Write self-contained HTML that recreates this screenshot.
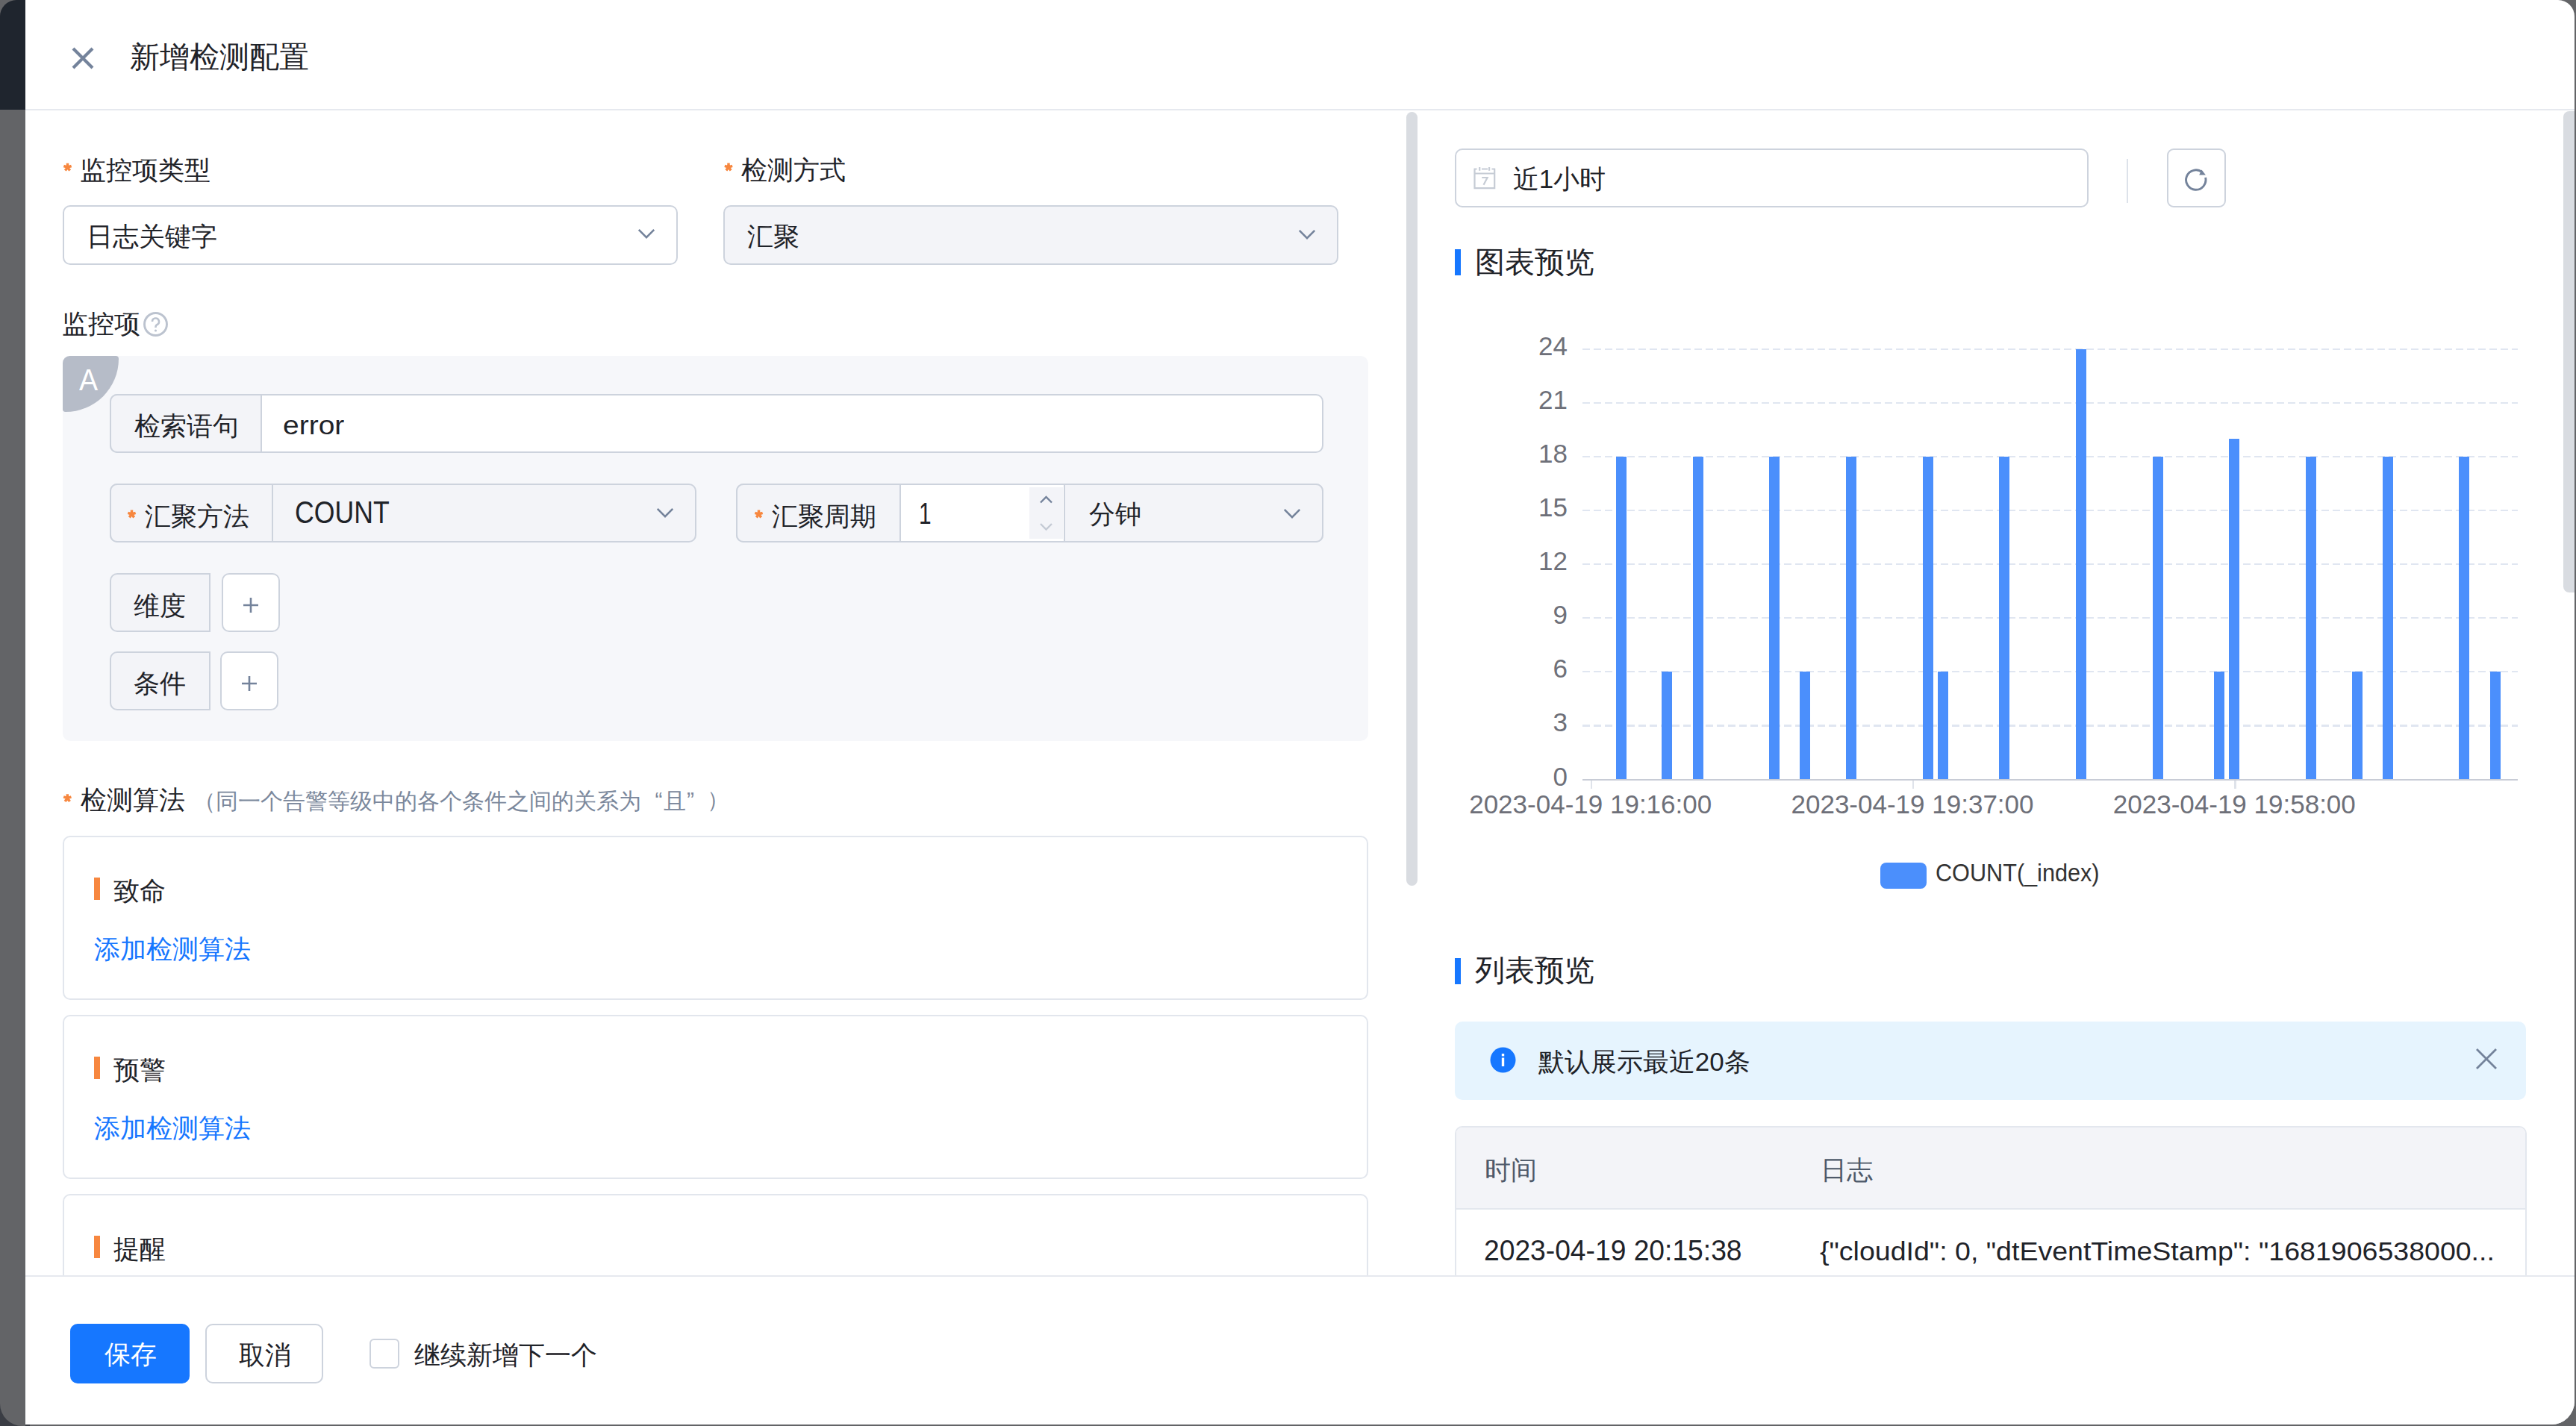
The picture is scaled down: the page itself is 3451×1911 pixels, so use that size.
<!DOCTYPE html>
<html><head><meta charset="utf-8"><title>新增检测配置</title>
<style>
html,body{margin:0;padding:0;width:3451px;height:1911px;overflow:hidden;background:#636467}
.t{position:absolute;white-space:nowrap;font-family:"Liberation Sans",sans-serif;line-height:1;}
</style></head><body>
<div style="position:absolute;left:0px;top:0px;width:3451px;height:1911px;background:#636467"></div>
<div style="position:absolute;left:0px;top:1860px;width:40px;height:51px;background:#3a3d44"></div>
<div style="position:absolute;left:0px;top:147px;width:34px;height:1764px;background:#636467;border-bottom-left-radius:30px"></div>
<div style="position:absolute;left:0px;top:0px;width:34px;height:147px;background:#1f252e;border-top-left-radius:22px"></div>
<div style="position:absolute;left:34px;top:0px;width:3415px;height:1909px;background:#fff;border-top-right-radius:22px;border-bottom-right-radius:31px"></div>
<div style="position:absolute;left:34px;top:146px;width:3415px;height:2px;background:#e6e9ef"></div>
<svg style="position:absolute;left:95px;top:62px" width="32" height="32" viewBox="0 0 32 32"><path d="M3 3L29 29M29 3L3 29" stroke="#74839b" stroke-width="4.2"/></svg>
<div class="t" style="left:173.5px;top:56.0px;font-size:40px;color:#1f2329;">新增检测配置</div>
<svg style="position:absolute;left:0;top:0" width="3451" height="1911"><path d="M90.50 224.20L90.50 218.80M90.50 224.20L95.64 222.53M90.50 224.20L93.67 228.57M90.50 224.20L87.33 228.57M90.50 224.20L85.36 222.53" stroke="#f7873f" stroke-width="3.5" stroke-linecap="butt"/></svg>
<div class="t" style="left:106.8px;top:210.3px;font-size:35px;color:#1f2329;">监控项类型</div>
<div style="position:absolute;left:84px;top:275px;width:824px;height:80px;box-sizing:border-box;border:2.5px solid #cdd3dd;border-radius:10px;background:#fff"></div>
<div class="t" style="left:116.2px;top:299.1px;font-size:35px;color:#1f2329;">日志关键字</div>
<svg style="position:absolute;left:853px;top:305px" width="26" height="16" viewBox="-2 -2 26 16"><path d="M0.8 0.8L11.0 11.2L21.2 0.8" fill="none" stroke="#74839b" stroke-width="2.6"/></svg>
<svg style="position:absolute;left:0;top:0" width="3451" height="1911"><path d="M976.00 224.00L976.00 218.60M976.00 224.00L981.14 222.33M976.00 224.00L979.17 228.37M976.00 224.00L972.83 228.37M976.00 224.00L970.86 222.33" stroke="#f7873f" stroke-width="3.5" stroke-linecap="butt"/></svg>
<div class="t" style="left:993.0px;top:210.0px;font-size:35px;color:#1f2329;">检测方式</div>
<div style="position:absolute;left:969px;top:275px;width:824px;height:80px;box-sizing:border-box;border:2.5px solid #cdd3dd;border-radius:10px;background:#f3f4f8"></div>
<div class="t" style="left:1001.2px;top:298.5px;font-size:35px;color:#1f2329;">汇聚</div>
<svg style="position:absolute;left:1738px;top:305.5px" width="26" height="16" viewBox="-2 -2 26 16"><path d="M0.8 0.8L11.0 11.2L21.2 0.8" fill="none" stroke="#74839b" stroke-width="2.6"/></svg>
<div class="t" style="left:83.0px;top:416.0px;font-size:35px;color:#1f2329;">监控项</div>
<svg style="position:absolute;left:192px;top:418px" width="34" height="34" viewBox="0 0 34 34"><circle cx="16.5" cy="16.5" r="15" fill="none" stroke="#bcc3cf" stroke-width="2.9"/><path d="M12 13a4.5 4.5 0 1 1 6.5 4c-1.3.7-2 1.5-2 3v1" fill="none" stroke="#bcc3cf" stroke-width="2.6"/><circle cx="16.5" cy="25" r="1.6" fill="#bcc3cf"/></svg>
<div style="position:absolute;left:84px;top:477px;width:1749px;height:516px;background:#f6f7fa;border-radius:10px"></div>
<div style="position:absolute;left:84px;top:477px;width:75px;height:75px;background:#b6bcc8;border-radius:10px 4px 100% 4px / 10px 4px 100% 4px"></div>
<div class="t" style="left:106.0px;top:489.5px;font-size:40.25px;color:#fff;transform:scaleX(0.9338);transform-origin:0 0;">A</div>
<div style="position:absolute;left:147px;top:528px;width:1626px;height:79px;box-sizing:border-box;border:2.5px solid #cdd3dd;border-radius:10px;background:#fff"></div>
<div style="position:absolute;left:147px;top:528px;width:204px;height:79px;box-sizing:border-box;border:2.5px solid #cdd3dd;border-radius:10px 0 0 10px;background:#f3f4f8"></div>
<div class="t" style="left:179.7px;top:553.2px;font-size:35px;color:#1f2329;">检索语句</div>
<div class="t" style="left:378.7px;top:553.4px;font-size:35.46px;color:#1f2329;transform:scaleX(1.0994);transform-origin:0 0;">error</div>
<div style="position:absolute;left:147px;top:648px;width:786px;height:79px;box-sizing:border-box;border:2.5px solid #cdd3dd;border-radius:10px;background:#f3f4f8"></div>
<div style="position:absolute;left:147px;top:648px;width:219px;height:79px;box-sizing:border-box;border:2.5px solid #cdd3dd;border-radius:10px 0 0 10px;background:#f3f4f8"></div>
<svg style="position:absolute;left:0;top:0" width="3451" height="1911"><path d="M176.50 689.00L176.50 683.60M176.50 689.00L181.64 687.33M176.50 689.00L179.67 693.37M176.50 689.00L173.33 693.37M176.50 689.00L171.36 687.33" stroke="#f7873f" stroke-width="3.5" stroke-linecap="butt"/></svg>
<div class="t" style="left:193.8px;top:674.2px;font-size:35px;color:#1f2329;">汇聚方法</div>
<div class="t" style="left:395.3px;top:666.2px;font-size:41.71px;color:#1f2329;transform:scaleX(0.8543);transform-origin:0 0;">COUNT</div>
<svg style="position:absolute;left:878px;top:679px" width="26" height="16" viewBox="-2 -2 26 16"><path d="M0.8 0.8L11.0 11.2L21.2 0.8" fill="none" stroke="#74839b" stroke-width="2.6"/></svg>
<div style="position:absolute;left:986px;top:648px;width:787px;height:79px;box-sizing:border-box;border:2.5px solid #cdd3dd;border-radius:10px;background:#fff"></div>
<div style="position:absolute;left:986px;top:648px;width:221px;height:79px;box-sizing:border-box;border:2.5px solid #cdd3dd;border-radius:10px 0 0 10px;background:#f3f4f8"></div>
<svg style="position:absolute;left:0;top:0" width="3451" height="1911"><path d="M1016.50 689.00L1016.50 683.60M1016.50 689.00L1021.64 687.33M1016.50 689.00L1019.67 693.37M1016.50 689.00L1013.33 693.37M1016.50 689.00L1011.36 687.33" stroke="#f7873f" stroke-width="3.5" stroke-linecap="butt"/></svg>
<div class="t" style="left:1034.0px;top:673.8px;font-size:35px;color:#1f2329;">汇聚周期</div>
<div class="t" style="left:1231.2px;top:668.6px;font-size:39.81px;color:#1f2329;transform:scaleX(0.7502);transform-origin:0 0;">1</div>
<div style="position:absolute;left:1379px;top:653px;width:45px;height:69px;background:#f3f4f8"></div>
<svg style="position:absolute;left:1392px;top:662px" width="20" height="52" viewBox="0 0 20 52"><path d="M2 11.5L9.5 4L17 11.5" fill="none" stroke="#74839b" stroke-width="2.4"/><path d="M2 40L9.5 47.5L17 40" fill="none" stroke="#c4cad4" stroke-width="2.4"/></svg>
<div style="position:absolute;left:1425px;top:648px;width:348px;height:79px;box-sizing:border-box;border:2.5px solid #cdd3dd;border-radius:0 10px 10px 0;background:#f3f4f8"></div>
<div class="t" style="left:1458.5px;top:671.0px;font-size:35px;color:#1f2329;">分钟</div>
<svg style="position:absolute;left:1718px;top:680px" width="26" height="16" viewBox="-2 -2 26 16"><path d="M0.8 0.8L11.0 11.2L21.2 0.8" fill="none" stroke="#74839b" stroke-width="2.6"/></svg>
<div style="position:absolute;left:147px;top:768px;width:135px;height:79px;box-sizing:border-box;border:2.5px solid #cdd3dd;border-radius:10px 0 0 10px;background:#f3f4f8"></div>
<div class="t" style="left:179.1px;top:794.0px;font-size:35px;color:#1f2329;">维度</div>
<div style="position:absolute;left:297px;top:768px;width:78px;height:79px;box-sizing:border-box;border:2.5px solid #cdd3dd;border-radius:10px;background:#fff"></div>
<svg style="position:absolute;left:325px;top:800px" width="22" height="22" viewBox="0 0 22 22"><path d="M1 11H21M11 1V21" stroke="#74839b" stroke-width="2.6"/></svg>
<div style="position:absolute;left:147px;top:873px;width:135px;height:79px;box-sizing:border-box;border:2.5px solid #cdd3dd;border-radius:10px 0 0 10px;background:#f3f4f8"></div>
<div class="t" style="left:179.1px;top:898.0px;font-size:35px;color:#1f2329;">条件</div>
<div style="position:absolute;left:295px;top:873px;width:78px;height:79px;box-sizing:border-box;border:2.5px solid #cdd3dd;border-radius:10px;background:#fff"></div>
<svg style="position:absolute;left:323px;top:905px" width="22" height="22" viewBox="0 0 22 22"><path d="M1 11H21M11 1V21" stroke="#74839b" stroke-width="2.6"/></svg>
<svg style="position:absolute;left:0;top:0" width="3451" height="1911"><path d="M90.30 1069.60L90.30 1064.20M90.30 1069.60L95.44 1067.93M90.30 1069.60L93.47 1073.97M90.30 1069.60L87.13 1073.97M90.30 1069.60L85.16 1067.93" stroke="#f7873f" stroke-width="3.5" stroke-linecap="butt"/></svg>
<div class="t" style="left:107.6px;top:1054.2px;font-size:35px;color:#1f2329;">检测算法</div>
<div class="t" style="left:258.8px;top:1058.7px;font-size:30px;color:#7b889c;">（同一个告警等级中的各个条件之间的关系为</div>
<div class="t" style="left:877.4px;top:1056.8px;font-size:30px;color:#7b889c;">“</div>
<div class="t" style="left:888.6px;top:1059.2px;font-size:30px;color:#7b889c;">且</div>
<div class="t" style="left:920.0px;top:1056.8px;font-size:30px;color:#7b889c;">”</div>
<div class="t" style="left:947.4px;top:1057.2px;font-size:30px;color:#7b889c;">）</div>
<div style="position:absolute;left:84px;top:1120px;width:1749px;height:220px;box-sizing:border-box;border:2.5px solid #e2e6ed;border-radius:10px;background:#fff"></div>
<div style="position:absolute;left:126px;top:1176px;width:8px;height:30px;background:#f7873f"></div>
<div class="t" style="left:151.8px;top:1175.5px;font-size:35px;color:#1f2329;">致命</div>
<div class="t" style="left:125.9px;top:1254.2px;font-size:35px;color:#1677ff;">添加检测算法</div>
<div style="position:absolute;left:84px;top:1360px;width:1749px;height:220px;box-sizing:border-box;border:2.5px solid #e2e6ed;border-radius:10px;background:#fff"></div>
<div style="position:absolute;left:126px;top:1416px;width:8px;height:30px;background:#f7873f"></div>
<div class="t" style="left:152.3px;top:1416.0px;font-size:35px;color:#1f2329;">预警</div>
<div class="t" style="left:125.9px;top:1493.7px;font-size:35px;color:#1677ff;">添加检测算法</div>
<div style="position:absolute;left:84px;top:1600px;width:1749px;height:200px;box-sizing:border-box;border:2.5px solid #e2e6ed;border-radius:10px;background:#fff"></div>
<div style="position:absolute;left:126px;top:1656px;width:8px;height:30px;background:#f7873f"></div>
<div class="t" style="left:151.8px;top:1655.8px;font-size:35px;color:#1f2329;">提醒</div>
<div style="position:absolute;left:1884px;top:150px;width:15px;height:1037px;background:#d9dce1;border-radius:8px"></div>
<div style="position:absolute;left:1949px;top:199px;width:849px;height:79px;box-sizing:border-box;border:2.5px solid #cdd3dd;border-radius:10px;background:#fff"></div>
<svg style="position:absolute;left:1974px;top:224px" width="32" height="32" viewBox="0 0 32 32"><path d="M1.5 2.5V28.2H28.2V2.5M0.5 2.5H4.5M11 2.5H19M24.5 2.5H29.2M0.5 8.5H29.2" fill="none" stroke="#c6ccd5" stroke-width="2.2"/><path d="M8.2 -0.2V4.8M21.1 -0.2V4.8" stroke="#c6ccd5" stroke-width="2.2"/><path d="M11.2 14H18.6L13.5 23.8" fill="none" stroke="#c6ccd5" stroke-width="2.2"/></svg>
<div class="t" style="left:2026.8px;top:222.2px;font-size:35px;color:#1f2329;">近1小时</div>
<div style="position:absolute;left:2849px;top:213px;width:2px;height:59px;background:#dde2ea"></div>
<div style="position:absolute;left:2903px;top:199px;width:79px;height:79px;box-sizing:border-box;border:2.5px solid #cdd3dd;border-radius:9px;background:#fff"></div>
<svg style="position:absolute;left:2922px;top:222px" width="40" height="40" viewBox="0 0 40 40"><path d="M32.6 15.9A13.2 13.2 0 1 1 28.2 8.9" fill="none" stroke="#74839b" stroke-width="2.9"/><path d="M24.2 12.6L32.9 12.6L27.5 5.4Z" fill="#74839b"/></svg>
<div style="position:absolute;left:1949px;top:334px;width:8px;height:35px;background:#1677ff"></div>
<div class="t" style="left:1976.2px;top:331.2px;font-size:40px;color:#1f2329;">图表预览</div>
<div class="t" style="left:2000px;width:100px;text-align:right;top:1022.5px;font-size:35px;color:#6e7079">0</div>
<div class="t" style="left:2000px;width:100px;text-align:right;top:950.4px;font-size:35px;color:#6e7079">3</div>
<div style="position:absolute;left:2120.4px;top:971.2px;width:1252.9px;height:2.4px;background:repeating-linear-gradient(90deg,#e0e6f1 0 10px,transparent 10px 15px)"></div>
<div class="t" style="left:2000px;width:100px;text-align:right;top:878.3px;font-size:35px;color:#6e7079">6</div>
<div style="position:absolute;left:2120.4px;top:899.1px;width:1252.9px;height:2.4px;background:repeating-linear-gradient(90deg,#e0e6f1 0 10px,transparent 10px 15px)"></div>
<div class="t" style="left:2000px;width:100px;text-align:right;top:806.2px;font-size:35px;color:#6e7079">9</div>
<div style="position:absolute;left:2120.4px;top:827.0px;width:1252.9px;height:2.4px;background:repeating-linear-gradient(90deg,#e0e6f1 0 10px,transparent 10px 15px)"></div>
<div class="t" style="left:2000px;width:100px;text-align:right;top:734.1px;font-size:35px;color:#6e7079">12</div>
<div style="position:absolute;left:2120.4px;top:754.9px;width:1252.9px;height:2.4px;background:repeating-linear-gradient(90deg,#e0e6f1 0 10px,transparent 10px 15px)"></div>
<div class="t" style="left:2000px;width:100px;text-align:right;top:662.0px;font-size:35px;color:#6e7079">15</div>
<div style="position:absolute;left:2120.4px;top:682.8px;width:1252.9px;height:2.4px;background:repeating-linear-gradient(90deg,#e0e6f1 0 10px,transparent 10px 15px)"></div>
<div class="t" style="left:2000px;width:100px;text-align:right;top:590.0px;font-size:35px;color:#6e7079">18</div>
<div style="position:absolute;left:2120.4px;top:610.8px;width:1252.9px;height:2.4px;background:repeating-linear-gradient(90deg,#e0e6f1 0 10px,transparent 10px 15px)"></div>
<div class="t" style="left:2000px;width:100px;text-align:right;top:517.9px;font-size:35px;color:#6e7079">21</div>
<div style="position:absolute;left:2120.4px;top:538.7px;width:1252.9px;height:2.4px;background:repeating-linear-gradient(90deg,#e0e6f1 0 10px,transparent 10px 15px)"></div>
<div class="t" style="left:2000px;width:100px;text-align:right;top:445.8px;font-size:35px;color:#6e7079">24</div>
<div style="position:absolute;left:2120.4px;top:466.6px;width:1252.9px;height:2.4px;background:repeating-linear-gradient(90deg,#e0e6f1 0 10px,transparent 10px 15px)"></div>
<div style="position:absolute;left:2130.7px;top:1044.5px;width:2.4px;height:12px;background:#dfe3ea"></div>
<div class="t" style="left:1880.7px;width:500px;text-align:center;top:1060px;font-size:35px;color:#6e7079">2023-04-19 19:16:00</div>
<div style="position:absolute;left:2562.0px;top:1044.5px;width:2.4px;height:12px;background:#dfe3ea"></div>
<div class="t" style="left:2312.0px;width:500px;text-align:center;top:1060px;font-size:35px;color:#6e7079">2023-04-19 19:37:00</div>
<div style="position:absolute;left:2993.3px;top:1044.5px;width:2.4px;height:12px;background:#dfe3ea"></div>
<div class="t" style="left:2743.3px;width:500px;text-align:center;top:1060px;font-size:35px;color:#6e7079">2023-04-19 19:58:00</div>
<div style="position:absolute;left:2164.8px;top:612.0px;width:14px;height:432.5px;background:#4b8ffc"></div>
<div style="position:absolute;left:2226.4px;top:900.3px;width:14px;height:144.2px;background:#4b8ffc"></div>
<div style="position:absolute;left:2267.5px;top:612.0px;width:14px;height:432.5px;background:#4b8ffc"></div>
<div style="position:absolute;left:2370.2px;top:612.0px;width:14px;height:432.5px;background:#4b8ffc"></div>
<div style="position:absolute;left:2411.2px;top:900.3px;width:14px;height:144.2px;background:#4b8ffc"></div>
<div style="position:absolute;left:2472.8px;top:612.0px;width:14px;height:432.5px;background:#4b8ffc"></div>
<div style="position:absolute;left:2575.6px;top:612.0px;width:14px;height:432.5px;background:#4b8ffc"></div>
<div style="position:absolute;left:2596.1px;top:900.3px;width:14px;height:144.2px;background:#4b8ffc"></div>
<div style="position:absolute;left:2678.2px;top:612.0px;width:14px;height:432.5px;background:#4b8ffc"></div>
<div style="position:absolute;left:2780.9px;top:467.8px;width:14px;height:576.7px;background:#4b8ffc"></div>
<div style="position:absolute;left:2883.7px;top:612.0px;width:14px;height:432.5px;background:#4b8ffc"></div>
<div style="position:absolute;left:2965.8px;top:900.3px;width:14px;height:144.2px;background:#4b8ffc"></div>
<div style="position:absolute;left:2986.3px;top:587.9px;width:14px;height:456.6px;background:#4b8ffc"></div>
<div style="position:absolute;left:3089.1px;top:612.0px;width:14px;height:432.5px;background:#4b8ffc"></div>
<div style="position:absolute;left:3150.7px;top:900.3px;width:14px;height:144.2px;background:#4b8ffc"></div>
<div style="position:absolute;left:3191.8px;top:612.0px;width:14px;height:432.5px;background:#4b8ffc"></div>
<div style="position:absolute;left:3294.4px;top:612.0px;width:14px;height:432.5px;background:#4b8ffc"></div>
<div style="position:absolute;left:3335.5px;top:900.3px;width:14px;height:144.2px;background:#4b8ffc"></div>
<div style="position:absolute;left:2120.4px;top:1043.9px;width:1252.9px;height:2.4px;background:#c8ccd6"></div>
<div style="position:absolute;left:2519px;top:1156px;width:62px;height:35px;background:#4b8ffc;border-radius:8px"></div>
<div class="t" style="left:2593.1px;top:1154.0px;font-size:32.68px;color:#333;transform:scaleX(0.9374);transform-origin:0 0;">COUNT(_index)</div>
<div style="position:absolute;left:1949px;top:1284px;width:8px;height:35px;background:#1677ff"></div>
<div class="t" style="left:1976.0px;top:1280.3px;font-size:40px;color:#1f2329;">列表预览</div>
<div style="position:absolute;left:1949px;top:1369px;width:1435px;height:105px;background:#e6f4fe;border-radius:10px"></div>
<svg style="position:absolute;left:1996px;top:1403px" width="36" height="36" viewBox="0 0 36 36"><circle cx="17.5" cy="17.5" r="17" fill="#1677ff"/><rect x="15.8" y="14.5" width="3.4" height="11.5" fill="#fff"/><rect x="15.8" y="9" width="3.4" height="3.4" fill="#fff"/></svg>
<div class="t" style="left:2060.8px;top:1404.7px;font-size:35px;color:#1f2329;">默认展示最近20条</div>
<svg style="position:absolute;left:3316px;top:1404px" width="30" height="30" viewBox="0 0 30 30"><path d="M2 2L28 28M28 2L2 28" stroke="#74839b" stroke-width="2.8"/></svg>
<div style="position:absolute;left:1949px;top:1509px;width:1436px;height:291px;box-sizing:border-box;border:2.5px solid #e3e7ee;border-radius:10px 10px 0 0;background:#fff"></div>
<div style="position:absolute;left:1951px;top:1511px;width:1432px;height:108px;background:#f3f4f8;border-radius:8px 8px 0 0"></div>
<div style="position:absolute;left:1951px;top:1619px;width:1432px;height:2px;background:#e3e7ee"></div>
<div class="t" style="left:1989.2px;top:1549.8px;font-size:35px;color:#4e5969;">时间</div>
<div class="t" style="left:2438.6px;top:1549.5px;font-size:35px;color:#4e5969;">日志</div>
<div class="t" style="left:1987.9px;top:1656.0px;font-size:39.67px;color:#1f2329;transform:scaleX(0.9383);transform-origin:0 0;">2023-04-19 20:15:38</div>
<div class="t" style="left:2437.9px;top:1659.7px;font-size:34.36px;color:#1f2329;transform:scaleX(1.0922);transform-origin:0 0;">{"cloudId": 0, "dtEventTimeStamp": "1681906538000...</div>
<div style="position:absolute;left:3434px;top:149px;width:15px;height:645px;background:#d9dce1;border-radius:8px 0 0 8px"></div>
<div style="position:absolute;left:34px;top:1709px;width:3415px;height:200px;background:#fff;border-bottom-right-radius:31px"></div>
<div style="position:absolute;left:34px;top:1709px;width:3415px;height:2px;background:#e6e9ef"></div>
<div style="position:absolute;left:94px;top:1774px;width:160px;height:80px;background:#1677ff;border-radius:10px"></div>
<div class="t" style="left:139.6px;top:1797.3px;font-size:35px;color:#fff;">保存</div>
<div style="position:absolute;left:275px;top:1774px;width:158px;height:80px;box-sizing:border-box;border:2.5px solid #cdd3dd;border-radius:10px;background:#fff"></div>
<div class="t" style="left:319.5px;top:1798.3px;font-size:35px;color:#1f2329;">取消</div>
<div style="position:absolute;left:495px;top:1794px;width:40px;height:40px;box-sizing:border-box;border:2.5px solid #cdd3dd;border-radius:6px;background:#fff"></div>
<div class="t" style="left:554.8px;top:1798.3px;font-size:35px;color:#1f2329;">继续新增下一个</div>
</body></html>
